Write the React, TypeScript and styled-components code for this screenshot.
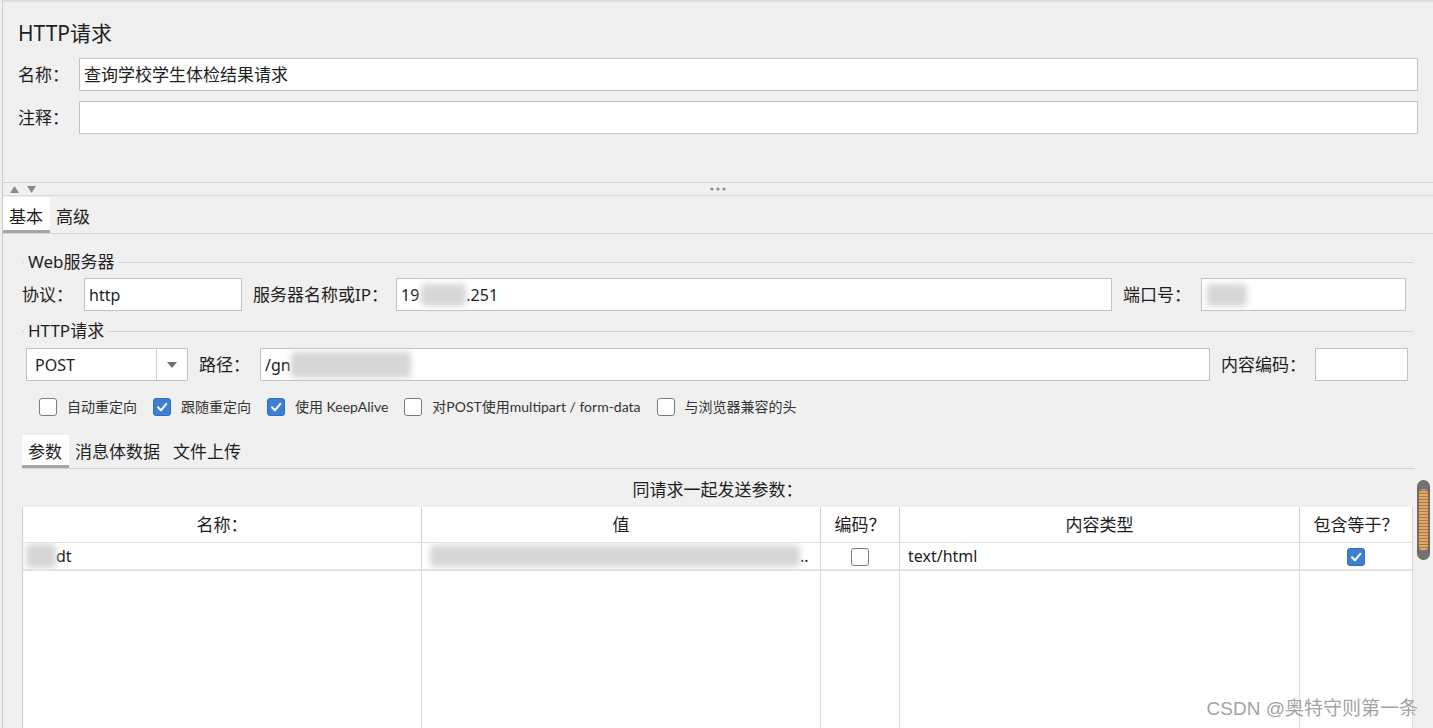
import React from "react";
import styled, { createGlobalStyle, css } from "styled-components";

const FONT = `"Noto Sans", "Noto Sans CJK SC", sans-serif`;

const GlobalStyle = createGlobalStyle`
  html, body { margin: 0; padding: 0; background: #f0f0f0; overflow: hidden; }
  body { font-family: ${FONT}; color: #1e1e1e; }
  *, *::before, *::after { box-sizing: border-box; }
`;

const Frame = styled.div`
  position: relative;
  width: 1431px;
  height: 728px;
  margin-left: 2px;
  border-left: 1px solid #cbcbcb;
  border-top: 2px solid #dddddd;
  background: #f0f0f0;
  overflow: hidden;
  display: flex;
  flex-direction: column;
`;

const TopPane = styled.section`
  flex: none;
  height: 180px;
  padding: 19px 15px 0;
`;

const Heading = styled.h1`
  margin: 0 0 13px;
  font-weight: 400;
  font-size: 21px;
  line-height: 24px;
`;

const FieldRow = styled.div`
  display: grid;
  grid-template-columns: 61px 1fr;
  align-items: center;
  & + & {
    margin-top: 10px;
  }
`;

const Label = styled.span<{ $w?: number }>`
  flex: none;
  ${(p) => p.$w !== undefined && css`width: ${p.$w}px;`}
  font-size: 17px;
  line-height: 22px;
  white-space: nowrap;
`;

const TextField = styled.div<{ $w?: number; $size?: number }>`
  display: flex;
  align-items: center;
  height: 33px;
  ${(p) =>
    p.$w
      ? css`
          flex: none;
          width: ${p.$w}px;
        `
      : css`
          flex: 1;
          min-width: 0;
        `}
  padding: 0 4px;
  background: #fff;
  border: 1px solid #c3c3c3;
  font-size: ${(p) => p.$size ?? 16}px;
  line-height: 20px;
  white-space: nowrap;
  overflow: hidden;
`;

const Redact = styled.span<{ $w: number; $h: number; $ml?: number }>`
  display: inline-block;
  flex: none;
  width: ${(p) => p.$w}px;
  height: ${(p) => p.$h}px;
  margin-left: ${(p) => p.$ml ?? 0}px;
  background: #d6d6d6;
  border-radius: 4px;
  filter: blur(3px);
  vertical-align: middle;
`;

const Splitter = styled.div`
  flex: none;
  height: 14px;
  border-top: 1px solid #d3d3d3;
  border-bottom: 1px solid #d8d8d8;
  display: grid;
  grid-template-columns: 1fr auto 1fr;
  align-items: center;
`;

const Arrows = styled.div`
  display: flex;
  gap: 8px;
  padding-left: 7px;
`;

const TabStrip = styled.div<{ $mt: number; $mr?: number }>`
  flex: none;
  display: flex;
  margin: ${(p) => p.$mt}px ${(p) => p.$mr ?? 0}px 0 0;
  border-bottom: 1px solid #d3d3d3;
`;

const Tab = styled.div<{ $active?: boolean; $h: number; $pt?: number }>`
  height: ${(p) => p.$h}px;
  padding: ${(p) => p.$pt ?? 0}px 7px 0 6px;
  display: flex;
  align-items: center;
  font-size: 17px;
  line-height: 22px;
  white-space: nowrap;
  ${(p) =>
    p.$active &&
    css`
      background: #fff;
      box-shadow: inset 0 -3px 0 #a6a6a6;
    `}
`;

const LowerPane = styled.section`
  flex: 1;
  min-height: 0;
  display: flex;
  flex-direction: column;
  padding-left: 19px;
`;

const GroupTitle = styled.div<{ $mt: number }>`
  flex: none;
  display: flex;
  align-items: center;
  gap: 4px;
  margin: ${(p) => p.$mt}px 20px 0 0;
  height: 22px;
  font-size: 17px;
  line-height: 22px;
  white-space: nowrap;
  &::before {
    content: "";
    width: 2px;
    height: 1px;
    background: #d0d0d0;
  }
  &::after {
    content: "";
    flex: 1;
    height: 1px;
    background: #d2d2d2;
  }
`;

const InputRow = styled.div<{ $mt: number; $pl?: number; $pr: number }>`
  flex: none;
  display: flex;
  align-items: center;
  gap: 11px;
  margin-top: ${(p) => p.$mt}px;
  padding: 0 ${(p) => p.$pr}px 0 ${(p) => p.$pl ?? 0}px;
  height: 33px;
`;

const Select = styled.div`
  flex: none;
  width: 162px;
  height: 33px;
  display: flex;
  background: #fff;
  border: 1px solid #c3c3c3;
`;

const SelectValue = styled.span`
  flex: 1;
  display: flex;
  align-items: center;
  padding-left: 8px;
  font-size: 16px;
`;

const SelectButton = styled.span`
  flex: none;
  width: 31px;
  border-left: 1px solid #cfcfcf;
  display: flex;
  align-items: center;
  justify-content: center;
`;

const CheckRow = styled.div`
  flex: none;
  display: flex;
  align-items: center;
  gap: 16px;
  margin-top: 14px;
  padding-left: 17px;
  height: 24px;
`;

const CheckItem = styled.label`
  display: flex;
  align-items: center;
  gap: 10px;
`;

const Box = styled.span<{ $checked?: boolean }>`
  flex: none;
  width: 18px;
  height: 18px;
  border-radius: 3px;
  display: inline-flex;
  align-items: center;
  justify-content: center;
  ${(p) =>
    p.$checked
      ? css`
          background: #3e7fd3;
          border: 1px solid #2f6dbd;
        `
      : css`
          background: #fff;
          border: 1px solid #7a7a7a;
        `}
`;

const CheckText = styled.span`
  font-family: Lato, "Noto Sans CJK SC", sans-serif;
  font-size: 14px;
  line-height: 18px;
  color: #333;
  white-space: nowrap;
`;

const ParamsArea = styled.div`
  flex: 1;
  min-height: 0;
  display: grid;
  grid-template-columns: 1fr 20px;
`;

const ParamsMain = styled.div`
  display: flex;
  flex-direction: column;
  min-width: 0;
`;

const ParamsCaption = styled.div`
  margin-top: 10px;
  text-align: center;
  font-size: 17px;
  line-height: 22px;
`;

const ScrollTrack = styled.div`
  padding: 11px 3px 0 4px;
`;

const Thumb = styled.div`
  width: 13px;
  height: 80px;
  border-radius: 7px;
  border: 2px solid #6b6b6b;
  background: repeating-linear-gradient(
    to bottom,
    #e3aa62 0px,
    #e3aa62 2px,
    #a57a45 2px,
    #a57a45 3px
  );
  box-shadow: inset 0 7px 0 #727272, inset 0 -7px 0 #727272;
`;

const Grid = styled.table`
  margin-top: 6px;
  width: 100%;
  table-layout: fixed;
  border-collapse: separate;
  border-spacing: 0;
  background: #fff;
`;

const Col = styled.col<{ $w?: number }>`
  ${(p) => p.$w !== undefined && css`width: ${p.$w}px;`}
`;

const HeadCell = styled.th`
  height: 36px;
  padding: 0;
  font-size: 17px;
  font-weight: 400;
  line-height: 22px;
  text-align: center;
  border-bottom: 1px solid #e0e0e0;
  border-right: 1px solid #cfcfcf;
  &:first-child {
    border-left: 1px solid #cfcfcf;
  }
`;

const Cell = styled.td<{ $pl?: number; $center?: boolean }>`
  height: 28px;
  padding: 0 0 0 ${(p) => p.$pl ?? 0}px;
  font-size: 16px;
  line-height: 20px;
  white-space: nowrap;
  overflow: hidden;
  border-bottom: 2px solid #e2e2e2;
  border-right: 1px solid #d6d6d6;
  ${(p) => p.$center && css`text-align: center;`}
  &:first-child {
    border-left: 1px solid #cfcfcf;
  }
`;

const FillCell = styled.td`
  height: 220px;
  padding: 0;
  border-right: 1px solid #dadada;
  &:first-child {
    border-left: 1px solid #cfcfcf;
  }
`;

const CellInner = styled.span`
  display: inline-flex;
  align-items: center;
  vertical-align: middle;
`;

const Watermark = styled.div`
  position: absolute;
  right: 15px;
  bottom: 8px;
  font-family: "Liberation Sans", "Noto Sans CJK SC", sans-serif;
  font-size: 19px;
  line-height: 22px;
  color: #a3a3a3;
  white-space: nowrap;
`;

const CheckMark = () => (
  <svg width="12" height="12" viewBox="0 0 12 12">
    <path d="M2 6.3 L4.9 9.3 L10.3 2.8" fill="none" stroke="#fff" strokeWidth="2" strokeLinecap="round" strokeLinejoin="round" />
  </svg>
);

const Check = ({ checked }: { checked?: boolean }) => (
  <Box $checked={checked}>{checked && <CheckMark />}</Box>
);

const Option = ({ checked, label }: { checked?: boolean; label: string }) => (
  <CheckItem>
    <Check checked={checked} />
    <CheckText>{label}</CheckText>
  </CheckItem>
);

export default function App() {
  return (
    <>
      <GlobalStyle />
      <Frame>
        <TopPane>
          <Heading>HTTP请求</Heading>
          <FieldRow>
            <Label>名称：</Label>
            <TextField $size={17}>查询学校学生体检结果请求</TextField>
          </FieldRow>
          <FieldRow>
            <Label>注释：</Label>
            <TextField />
          </FieldRow>
        </TopPane>

        <Splitter>
          <Arrows>
            <svg width="9" height="7" viewBox="0 0 9 7">
              <polygon points="4.5,0 9,7 0,7" fill="#8a8a8a" />
            </svg>
            <svg width="9" height="7" viewBox="0 0 9 7">
              <polygon points="0,0 9,0 4.5,7" fill="#8a8a8a" />
            </svg>
          </Arrows>
          <svg width="16" height="4" viewBox="0 0 16 4">
            <circle cx="2" cy="2" r="1.6" fill="#8a8a8a" />
            <circle cx="8" cy="2" r="1.6" fill="#8a8a8a" />
            <circle cx="14" cy="2" r="1.6" fill="#8a8a8a" />
          </svg>
          <span />
        </Splitter>

        <TabStrip $mt={1}>
          <Tab $h={36} $pt={3} $active>基本</Tab>
          <Tab $h={36} $pt={3}>高级</Tab>
        </TabStrip>

        <LowerPane>
          <GroupTitle $mt={17}>Web服务器</GroupTitle>
          <InputRow $mt={5} $pr={27}>
            <Label $w={51}>协议：</Label>
            <TextField $w={158}>http</TextField>
            <Label $w={132}>服务器名称或IP：</Label>
            <TextField>
              19
              <Redact $w={45} $h={22} $ml={2} />
              .251
            </TextField>
            <Label $w={67}>端口号：</Label>
            <TextField $w={205}>
              <Redact $w={40} $h={22} $ml={1} />
            </TextField>
          </InputRow>

          <GroupTitle $mt={9}>HTTP请求</GroupTitle>
          <InputRow $mt={6} $pl={4} $pr={25}>
            <Select>
              <SelectValue>POST</SelectValue>
              <SelectButton>
                <svg width="10" height="6" viewBox="0 0 10 6">
                  <polygon points="0,0 10,0 5,6" fill="#6f6f6f" />
                </svg>
              </SelectButton>
            </Select>
            <Label $w={50}>路径：</Label>
            <TextField>
              /gn
              <Redact $w={120} $h={26} />
            </TextField>
            <Label $w={83}>内容编码：</Label>
            <TextField $w={93} />
          </InputRow>

          <CheckRow>
            <Option label="自动重定向" />
            <Option checked label="跟随重定向" />
            <Option checked label="使用 KeepAlive" />
            <Option label="对POST使用multipart / form-data" />
            <Option label="与浏览器兼容的头" />
          </CheckRow>

          <TabStrip $mt={16} $mr={18}>
            <Tab $h={33} $pt={1} $active>参数</Tab>
            <Tab $h={33} $pt={1}>消息体数据</Tab>
            <Tab $h={33} $pt={1}>文件上传</Tab>
          </TabStrip>

          <ParamsArea>
            <ParamsMain>
              <ParamsCaption>同请求一起发送参数：</ParamsCaption>
              <Grid>
                <colgroup>
                  <Col $w={400} />
                  <Col $w={399} />
                  <Col $w={79} />
                  <Col $w={400} />
                  <Col />
                </colgroup>
                <thead>
                  <tr>
                    <HeadCell>名称：</HeadCell>
                    <HeadCell>值</HeadCell>
                    <HeadCell>编码？</HeadCell>
                    <HeadCell>内容类型</HeadCell>
                    <HeadCell>包含等于？</HeadCell>
                  </tr>
                </thead>
                <tbody>
                  <tr>
                    <Cell $pl={3}>
                      <CellInner>
                        <Redact $w={30} $h={24} />
                        dt
                      </CellInner>
                    </Cell>
                    <Cell $pl={8}>
                      <CellInner>
                        <Redact $w={370} $h={22} />
                        ..
                      </CellInner>
                    </Cell>
                    <Cell $center>
                      <CellInner>
                        <Check />
                      </CellInner>
                    </Cell>
                    <Cell $pl={8}>text/html</Cell>
                    <Cell $center>
                      <CellInner>
                        <Check checked />
                      </CellInner>
                    </Cell>
                  </tr>
                  <tr>
                    <FillCell />
                    <FillCell />
                    <FillCell />
                    <FillCell />
                    <FillCell />
                  </tr>
                </tbody>
              </Grid>
            </ParamsMain>
            <ScrollTrack>
              <Thumb />
            </ScrollTrack>
          </ParamsArea>
        </LowerPane>

        <Watermark>CSDN @奥特守则第一条</Watermark>
      </Frame>
    </>
  );
}
